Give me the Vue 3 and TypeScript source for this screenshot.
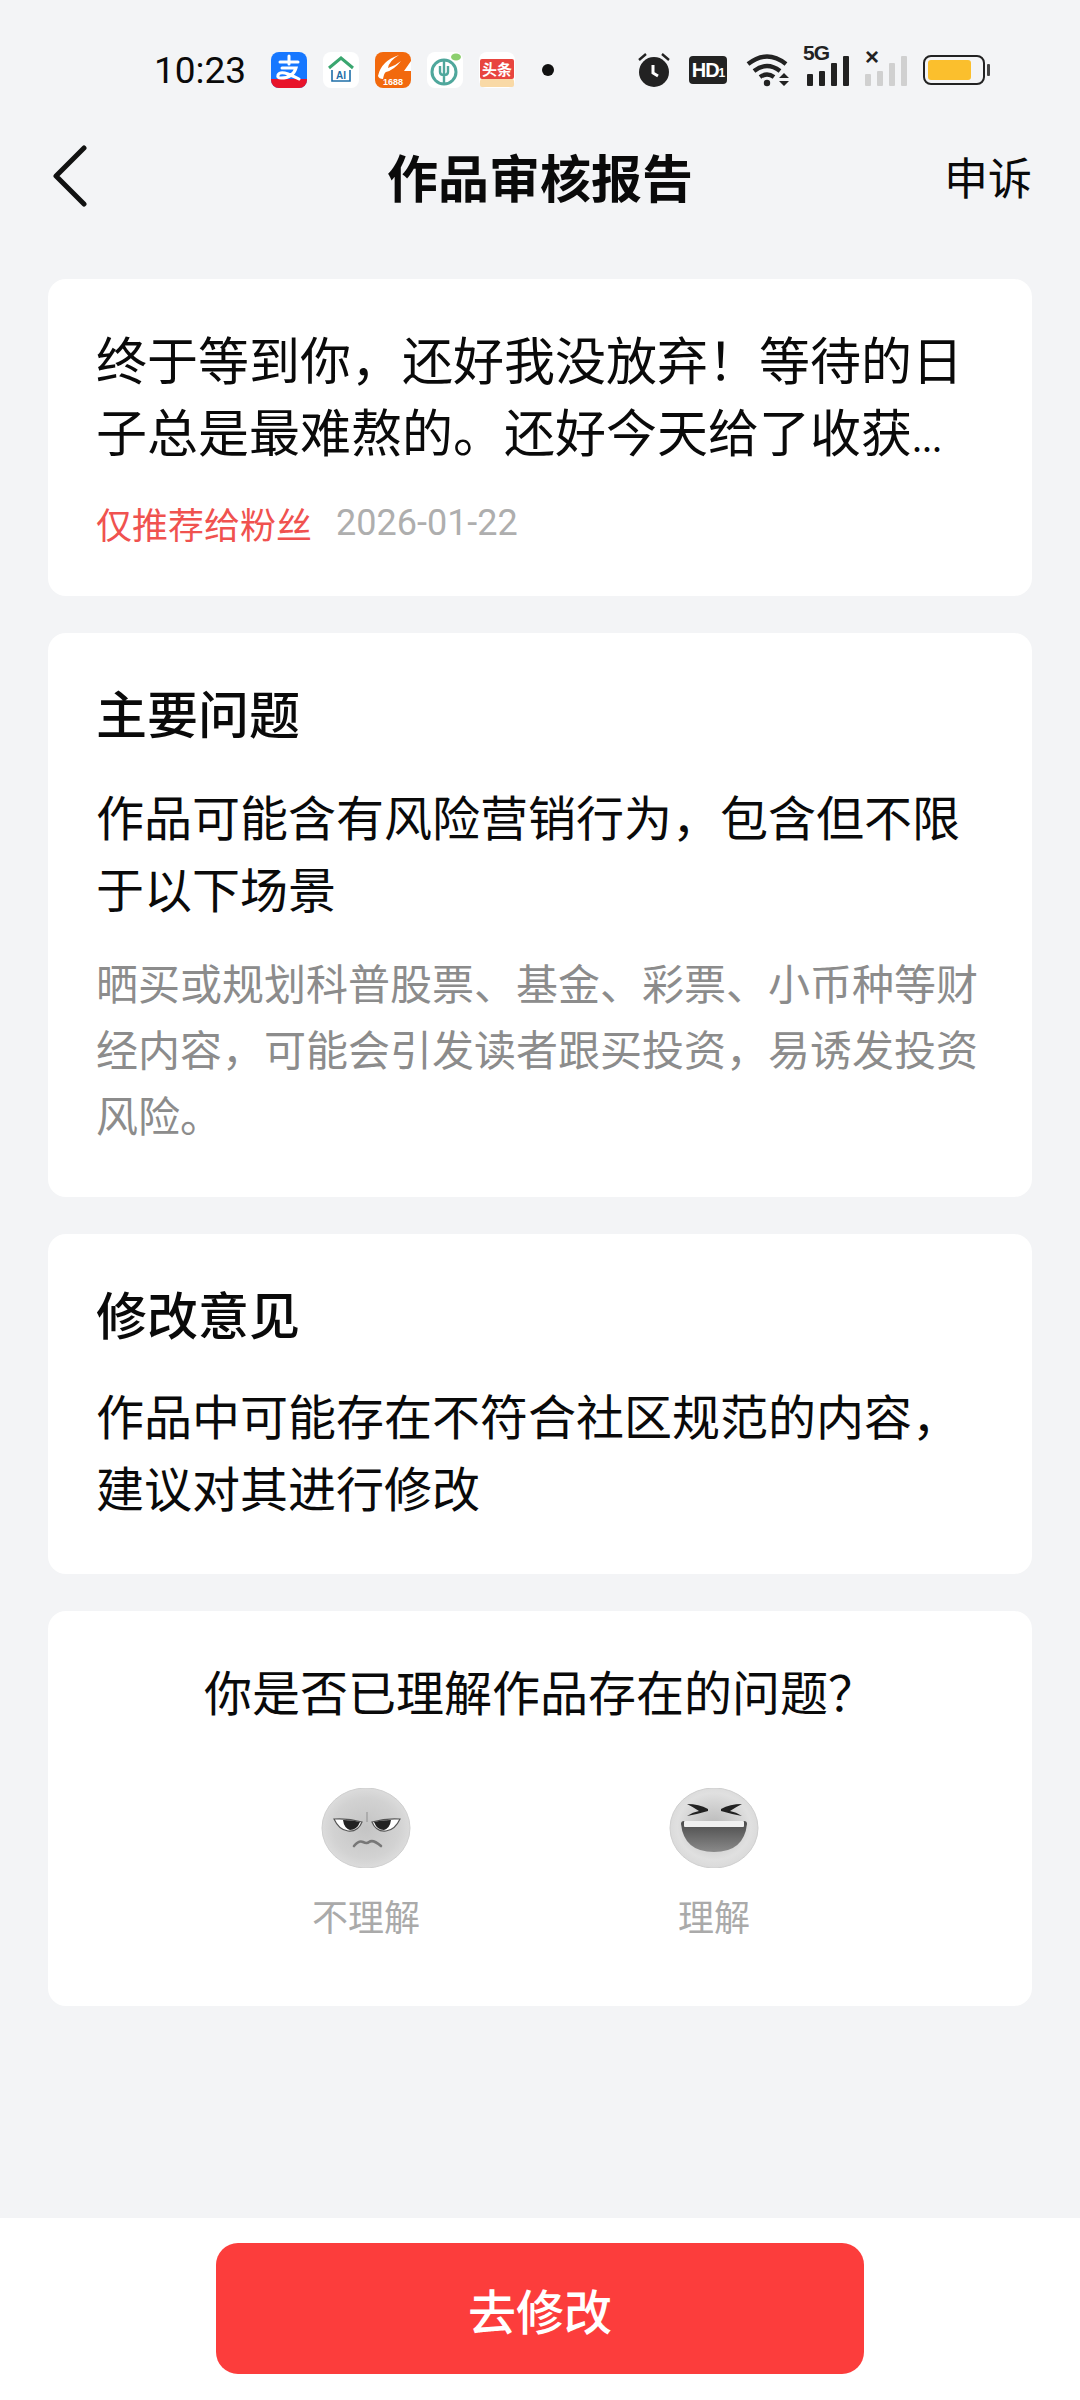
<script setup lang="ts">
const paragraph = '晒买或规划科普股票、基金、彩票、小币种等财经内容，可能会引发读者跟买投资，易诱发投资风险。'
const signalBars = [
  { x: 0, h: 12 },
  { x: 12, h: 15 },
  { x: 24, h: 23 },
  { x: 36, h: 30 },
]
</script>

<template>
  <div class="page">
    <!-- status bar -->
    <div class="status">
      <span class="time">10:23</span>
      <div class="apps">
        <svg class="app" viewBox="0 0 36 36">
          <rect width="36" height="36" rx="8" fill="#1677ff" />
          <path d="M0 27h36v1a8 8 0 0 1-8 8H8a8 8 0 0 1-8-8z" fill="#e8132a" />
          <path d="M18 4v8M9 10h18M11 16h14q-3 10-15 10-4 0-3-3 2-4 10-1 5 2 11 5" fill="none" stroke="#fff" stroke-width="3" stroke-linecap="round" />
        </svg>
        <svg class="app" viewBox="0 0 36 36">
          <rect width="36" height="36" rx="8" fill="#fff" />
          <path d="M6 16L18 6l12 10" fill="none" stroke="#3aa66f" stroke-width="3" />
          <path d="M9 18v11h18V18" fill="none" stroke="#1f6fa8" stroke-width="1.6" />
          <text x="18" y="27" text-anchor="middle" font-size="10" font-family="'Liberation Sans'" font-weight="700" fill="#1f6fa8">AI</text>
        </svg>
        <svg class="app" viewBox="0 0 36 36">
          <rect width="36" height="36" rx="8" fill="#f2690d" />
          <path d="M3 24Q6 9 24 3q-10 6-11 13 7-2 13-7-7 9-15 11-2 1-3 7-4 0-5-3zM36 9l-7 10h7" fill="#fff" />
          <text x="18" y="33" text-anchor="middle" font-size="9" font-family="'Liberation Sans'" font-weight="700" fill="#fff">1688</text>
        </svg>
        <svg class="app" viewBox="0 0 36 36">
          <rect width="36" height="36" rx="8" fill="#fff" />
          <circle cx="17" cy="20" r="12" fill="none" stroke="#4fa79c" stroke-width="3" />
          <path d="M17 8v24M13 14v6q0 3 4 3t4-3v-6" fill="none" stroke="#4fa79c" stroke-width="2.4" />
          <ellipse cx="29" cy="5" rx="5" ry="3.5" fill="#8ccf6e" />
        </svg>
        <svg class="app" viewBox="0 0 36 36">
          <rect width="36" height="36" rx="8" fill="#fff" />
          <rect x="1" y="7" width="34" height="20" rx="2" fill="#e8453f" />
          <rect x="1" y="27" width="34" height="8" rx="2" fill="#f9d9a6" />
          <text x="18" y="23" text-anchor="middle" font-size="15" font-weight="700" font-family="'Noto Sans CJK SC'" fill="#fff">头条</text>
        </svg>
      </div>
      <span class="dot"></span>

      <div class="sys">
        <svg width="32" height="34" viewBox="0 0 32 34">
          <circle cx="16" cy="19" r="15" fill="#222" />
          <path d="M1 7l7-6M31 7l-7-6" stroke="#222" stroke-width="2.4" />
          <path d="M15 12v8l5 3" fill="none" stroke="#fff" stroke-width="3" />
        </svg>
        <span class="hd">HD<small>1</small></span>
        <svg class="wifi" width="46" height="34" viewBox="0 0 46 34">
          <path d="M2 11q19-15 38 0M8 18q13-10 26 0M14 24q7-5 14 0" fill="none" stroke="#222" stroke-width="4.4" />
          <circle cx="21" cy="30" r="3.2" fill="#222" />
          <path d="M33 25l5-5 5 5zM33 28l5 5 5-5z" fill="#222" />
        </svg>
        <div class="net net-main">
          <span class="net-label">5G</span>
          <svg width="46" height="30" viewBox="0 0 46 30">
            <rect v-for="b in signalBars" :key="b.x" :x="b.x + 1" :y="30 - b.h" width="6" :height="b.h" rx="1" fill="#222" />
          </svg>
        </div>
        <div class="net net-second">
          <span class="net-x">×</span>
          <svg width="44" height="30" viewBox="0 0 44 30">
            <rect v-for="b in signalBars" :key="b.x" :x="b.x" :y="30 - b.h" width="6" :height="b.h" rx="1" fill="#d0d0d0" />
          </svg>
        </div>
        <div class="battery">
          <span class="battery-fill"></span>
          <span class="battery-cap"></span>
        </div>
      </div>
    </div>

    <!-- nav -->
    <div class="nav">
      <svg class="back" width="38" height="62" viewBox="0 0 38 62">
        <path d="M33 3L5 31l28 28" fill="none" stroke="#111" stroke-width="5" stroke-linecap="round" stroke-linejoin="round" />
      </svg>
      <h1>作品审核报告</h1>
      <span class="appeal">申诉</span>
    </div>

    <main class="content">
      <section class="card first">
        <p class="lead">终于等到你，还好我没放弃！等待的日子总是最难熬的。还好今天给了收获<span class="more">...</span></p>
        <div class="meta">
          <span class="tag">仅推荐给粉丝</span>
          <span class="date">2026-01-22</span>
        </div>
      </section>

      <section class="card issue">
        <h2>主要问题</h2>
        <p class="main-text">作品可能含有风险营销行为，包含但不限于以下场景</p>
        <p class="sub-text">{{ paragraph }}</p>
      </section>

      <section class="card advice">
        <h2>修改意见</h2>
        <p class="main-text">作品中可能存在不符合社区规范的内容，建议对其进行修改</p>
      </section>

      <section class="card ask">
        <p class="question">你是否已理解作品存在的问题？</p>
        <div class="choices">
          <div class="choice">
            <svg class="face" viewBox="0 0 88 80">
              <defs>
                <radialGradient id="faceA" cx="50%" cy="50%" r="58%">
                  <stop offset="0" stop-color="#c4c4c4" />
                  <stop offset="0.65" stop-color="#d2d2d2" />
                  <stop offset="1" stop-color="#e2e2e2" />
                </radialGradient>
              </defs>
              <ellipse cx="44" cy="40" rx="44" ry="40" fill="url(#faceA)" stroke="#cfcfcf" />
              <path d="M12 31q14-1 28 3-4 10-14 9-9-1-14-12zM78 31q-14-1-28 3 4 10 14 9 9-1 14-12z" fill="#fff" stroke="#555" stroke-width="1.2" />
              <path d="M21 32q10 0 17 2-3 8-10 8-6-2-7-10zM69 32q-10 0-17 2 3 8 10 8 6-2 7-10z" fill="#222" />
              <path d="M45 24v10" stroke="#999" stroke-width="1.2" />
              <path d="M32 58q5-6 9-4t6 0q4-3 12 4" fill="none" stroke="#777" stroke-width="2.6" stroke-linecap="round" />
            </svg>
            <span>不理解</span>
          </div>
          <div class="choice">
            <svg class="face" viewBox="0 0 88 80">
              <defs>
                <radialGradient id="faceB" cx="50%" cy="48%" r="58%">
                  <stop offset="0" stop-color="#b8b8b8" />
                  <stop offset="0.72" stop-color="#e0e0e0" />
                  <stop offset="1" stop-color="#d6d6d6" />
                </radialGradient>
                <linearGradient id="mouth" x1="0" y1="0" x2="0" y2="1">
                  <stop offset="0" stop-color="#4a4a4a" />
                  <stop offset="1" stop-color="#8a8a8a" />
                </linearGradient>
              </defs>
              <ellipse cx="44" cy="40" rx="44" ry="40" fill="url(#faceB)" stroke="#cfcfcf" />
              <path d="M17 16q12 0 21 5l0 2q-10 3-21 5q6-4 12-5q-6-4-12-7zM72 16q-12 0-21 5l0 2q10 3 21 5q-6-4-12-5q6-4 12-7z" fill="#222" />
              <path d="M14 33h60q3 0 3 3-3 28-33 28T11 36q0-3 3-3z" fill="url(#mouth)" />
              <rect x="14" y="33" width="60" height="6" rx="1" fill="#f0f0f0" />
            </svg>
            <span>理解</span>
          </div>
        </div>
      </section>
    </main>

    <footer class="footer">
      <button type="button">去修改</button>
    </footer>
  </div>
</template>

<style scoped>
.page {
  width: 1080px;
  height: 2400px;
  display: flex;
  flex-direction: column;
  background: #f3f4f6;
  color: #0a0a0a;
  font-family: "Noto Sans CJK SC", "Liberation Sans", sans-serif;
}

.status {
  height: 100px;
  flex: none;
  display: flex;
  align-items: center;
  padding: 40px 90px 0 154px;
  box-sizing: border-box;
}

.time {
  font-family: Roboto, "Liberation Sans", sans-serif;
  font-size: 37px;
  width: 117px;
  color: #0a0a0a;
}

.apps {
  display: flex;
  gap: 16px;
}

.app {
  width: 36px;
  height: 36px;
  display: block;
}

.dot {
  width: 12px;
  height: 12px;
  margin-left: 27px;
  border-radius: 50%;
  background: #111;
}

.sys {
  margin-left: auto;
  display: flex;
  align-items: center;
}

.hd {
  width: 38px;
  height: 28px;
  margin-left: 19px;
  border-radius: 4px;
  background: #222;
  color: #fff;
  font-family: "Liberation Sans", sans-serif;
  font-size: 20px;
  font-weight: 700;
  line-height: 28px;
  text-align: center;
  letter-spacing: -1px;
}

.hd small {
  font-size: 12px;
}

.wifi {
  margin-left: 19px;
}

.net {
  position: relative;
  padding-top: 2px;
}

.net svg {
  display: block;
}

.net-main {
  margin-left: 14px;
}

.net-second {
  margin-left: 13px;
}

.net-label {
  position: absolute;
  left: -3px;
  top: -13px;
  font-family: "Liberation Sans", sans-serif;
  font-size: 21px;
  font-weight: 700;
  color: #222;
  letter-spacing: -1px;
}

.net-x {
  position: absolute;
  left: 0;
  top: -11px;
  font-family: "Liberation Sans", sans-serif;
  font-size: 24px;
  font-weight: 700;
  color: #222;
}

.battery {
  position: relative;
  width: 62px;
  height: 30px;
  margin-left: 14px;
  margin-right: 5px;
  padding: 3px;
  border: 2px solid #222;
  border-radius: 8px;
  box-sizing: border-box;
}

.battery-fill {
  display: block;
  width: 43px;
  height: 20px;
  border-radius: 3px;
  background: #fbbf2d;
}

.battery-cap {
  position: absolute;
  right: -7px;
  top: 7px;
  width: 3px;
  height: 12px;
  background: #444;
  border-radius: 1px;
}

.nav {
  position: relative;
  height: 152px;
  flex: none;
  display: flex;
  align-items: center;
  justify-content: space-between;
  padding: 0 48px 0 51px;
}

.back {
  display: block;
}

.nav h1 {
  position: absolute;
  left: 0;
  right: 0;
  margin: 0;
  text-align: center;
  font-size: 51px;
  font-weight: 700;
  line-height: 72px;
  pointer-events: none;
}

.appeal {
  font-size: 44px;
  line-height: 60px;
}

.content {
  flex: 1;
  padding: 27px 48px 0;
  display: flex;
  flex-direction: column;
  gap: 37px;
}

.card {
  background: #fff;
  border-radius: 18px;
  padding: 43px 48px 52px;
}

.card.first {
  padding-bottom: 48px;
}

.card.issue {
  padding-bottom: 50px;
}

.card h2 {
  margin: 0;
  font-size: 51px;
  font-weight: 500;
  line-height: 72px;
}

.lead {
  margin: 0;
  font-size: 51px;
  line-height: 72px;
}

.more {
  font-size: 36px;
  line-height: 1;
}

.main-text {
  margin: 31px 0 0;
  font-size: 48px;
  line-height: 72px;
}

.advice .main-text {
  margin-top: 29px;
}

.sub-text {
  margin: 26px 0 0;
  font-size: 42px;
  line-height: 66px;
  color: #8c8c8c;
}

.meta {
  margin-top: 32px;
  display: flex;
  align-items: center;
  gap: 24px;
  font-size: 36px;
  line-height: 50px;
}

.tag {
  color: #f0524f;
}

.date {
  font-family: Roboto, "Liberation Sans", sans-serif;
  color: #aeaeae;
}

.ask {
  height: 395px;
  box-sizing: border-box;
  padding: 47px 0 0;
}

.question {
  margin: 0;
  text-align: center;
  font-size: 48px;
  line-height: 64px;
}

.choices {
  margin-top: 66px;
  display: flex;
  justify-content: center;
  gap: 188px;
}

.choice {
  width: 160px;
  display: flex;
  flex-direction: column;
  align-items: center;
  font-size: 36px;
  line-height: 50px;
  color: #aaaaaa;
}

.face {
  width: 90px;
  height: 80px;
  display: block;
  margin-bottom: 22px;
}

.footer {
  height: 182px;
  flex: none;
  background: #fff;
  display: flex;
  justify-content: center;
  padding-top: 25px;
  box-sizing: border-box;
}

.footer button {
  width: 648px;
  height: 131px;
  border: none;
  border-radius: 22px;
  background: #fc3d3c;
  color: #fff;
  font-family: inherit;
  font-size: 48px;
  font-weight: 500;
}
</style>
